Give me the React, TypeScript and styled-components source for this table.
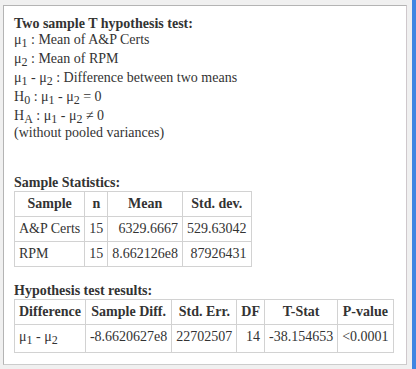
import React from "react";
import styled, { createGlobalStyle } from "styled-components";

const Global = createGlobalStyle`
  html, body { margin: 0; padding: 0; background: #f0f0f0; }
  body { font-family: "Liberation Serif", "Times New Roman", serif; color: #333; }
`;

const Frame = styled.div`
  box-sizing: border-box;
  width: 416px;
  height: 369px;
  padding: 5px 5px 0 3px;
  background: #f0f0f0;
  border-right: 4px solid #3f86e2;
`;

const Panel = styled.div`
  box-sizing: border-box;
  background: #fff;
  border: 1px solid #b4b4b4;
  border-right-color: #cfc8cc;
  border-bottom-color: #cccccc;
  padding: 10px 10px 11px 10px;
  font-size: 14px;
  line-height: 16px;
`;

const Line = styled.div<{ $pad?: number }>`
  white-space: nowrap;
  padding-bottom: ${(p) => p.$pad ?? 0}px;
`;

const Title = styled.div<{ $gap?: number }>`
  font-weight: bold;
  margin-top: ${(p) => p.$gap ?? 0}px;
`;

const Sub = styled.span`
  font-size: 12px;
  line-height: 0;
  vertical-align: -3px;
`;

const Table = styled.table`
  border-collapse: collapse;
  font-size: 14px;
  line-height: 16px;
`;

const Th = styled.th`
  border: 1px solid #d2d2d2;
  padding: 4px;
  font-weight: bold;
  text-align: center;
  vertical-align: top;
  white-space: nowrap;
`;

const Td = styled.td<{ $align?: "left" | "right"; $tall?: boolean }>`
  border: 1px solid #d2d2d2;
  padding: 4px 4px ${(p) => (p.$tall ? "7px" : "4px")} 4px;
  text-align: ${(p) => p.$align ?? "right"};
  vertical-align: top;
  white-space: nowrap;
`;

const Mu = ({ n }: { n: string }) => (
  <>
    μ<Sub>{n}</Sub>
  </>
);

export default function App() {
  return (
    <>
      <Global />
      <Frame>
        <Panel>
          <Title>Two sample T hypothesis test:</Title>
          <Line $pad={3}>
            <Mu n="1" /> : Mean of A&amp;P Certs
          </Line>
          <Line $pad={3}>
            <Mu n="2" /> : Mean of RPM
          </Line>
          <Line $pad={3}>
            <Mu n="1" /> - <Mu n="2" /> : Difference between two means
          </Line>
          <Line $pad={3}>
            H<Sub>0</Sub> : <Mu n="1" /> - <Mu n="2" /> = 0
          </Line>
          <Line $pad={1}>
            H<Sub>A</Sub> : <Mu n="1" /> - <Mu n="2" /> ≠ 0
          </Line>
          <Line>(without pooled variances)</Line>

          <Title $gap={34}>Sample Statistics:</Title>
          <Table>
            <thead>
              <tr>
                <Th>Sample</Th>
                <Th>n</Th>
                <Th>Mean</Th>
                <Th>Std. dev.</Th>
              </tr>
            </thead>
            <tbody>
              <tr>
                <Td $align="left">A&amp;P Certs</Td>
                <Td>15</Td>
                <Td>6329.6667</Td>
                <Td>529.63042</Td>
              </tr>
              <tr>
                <Td $align="left">RPM</Td>
                <Td>15</Td>
                <Td>8.662126e8</Td>
                <Td>87926431</Td>
              </tr>
            </tbody>
          </Table>

          <Title $gap={16}>Hypothesis test results:</Title>
          <Table>
            <thead>
              <tr>
                <Th>Difference</Th>
                <Th>Sample Diff.</Th>
                <Th>Std. Err.</Th>
                <Th>DF</Th>
                <Th>T-Stat</Th>
                <Th>P-value</Th>
              </tr>
            </thead>
            <tbody>
              <tr>
                <Td $align="left" $tall>
                  <Mu n="1" /> - <Mu n="2" />
                </Td>
                <Td>-8.6620627e8</Td>
                <Td>22702507</Td>
                <Td>14</Td>
                <Td>-38.154653</Td>
                <Td>&lt;0.0001</Td>
              </tr>
            </tbody>
          </Table>
        </Panel>
      </Frame>
    </>
  );
}
